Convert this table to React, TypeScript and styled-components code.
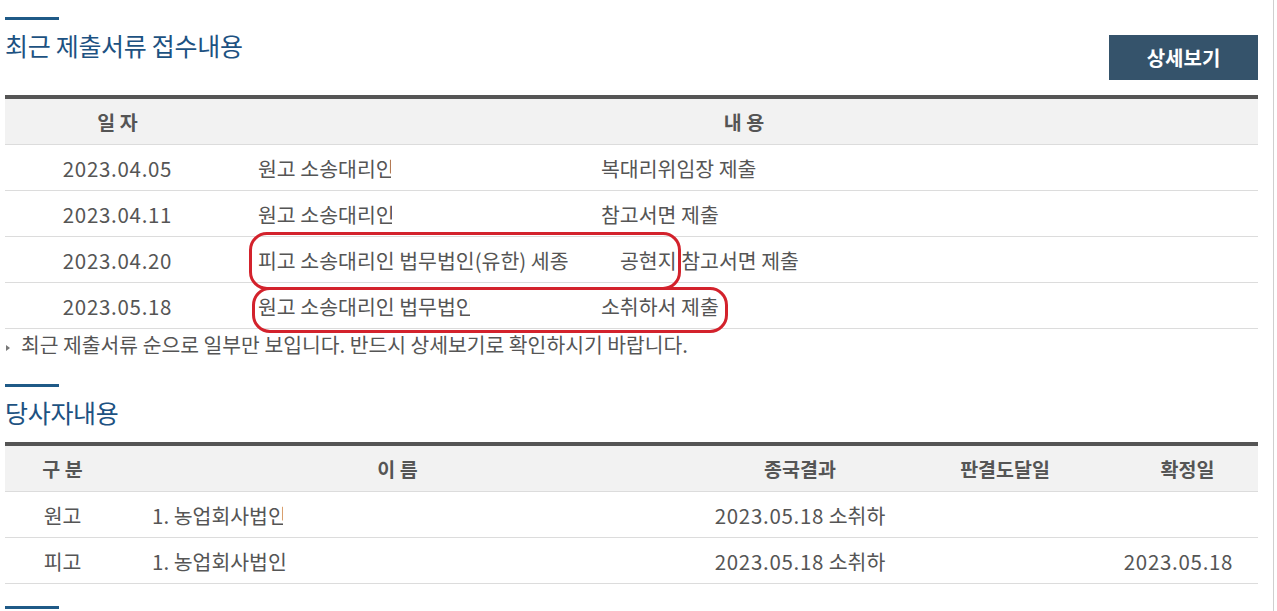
import React from "react";
import styled, { createGlobalStyle } from "styled-components";

const Global = createGlobalStyle`
  html, body { margin: 0; padding: 0; background: #fff; overflow: hidden; }
  body {
    font-family: "Noto Sans CJK KR", "Noto Sans", sans-serif;
    color: #555;
  }
`;

const Page = styled.div`
  box-sizing: border-box;
  width: 1274px;
  min-height: 611px;
  padding: 17px 15px 0 5px;
  border-right: 1px solid #cfcfcf;
`;

const Section = styled.section<{ $gap?: number }>`
  margin-top: ${(p) => p.$gap ?? 0}px;
`;

const Head = styled.div`
  display: flex;
  justify-content: space-between;
  align-items: flex-start;
  margin-bottom: 15px;
`;

const Bar = styled.div`
  width: 54px;
  height: 3px;
  background: #1f5a87;
`;

const Title = styled.h2`
  margin: 10px 0 0;
  font-size: 25px;
  line-height: 30px;
  font-weight: 400;
  color: #1d5282;
  letter-spacing: -0.3px;
`;

const DetailButton = styled.button`
  margin-top: 18px;
  width: 149px;
  height: 45px;
  border: 0;
  background: #35536b;
  color: #fff;
  font-family: inherit;
  font-size: 20px;
  font-weight: 700;
  cursor: pointer;
`;

const Table = styled.div`
  position: relative;
  border-top: 4px solid #555;
`;

const Row = styled.div<{ $cols: string; $head?: boolean }>`
  display: grid;
  grid-template-columns: ${(p) => p.$cols};
  align-items: center;
  box-sizing: border-box;
  height: 46px;
  border-bottom: 1px solid #dcdcdc;
  background: ${(p) => (p.$head ? "#f2f2f2" : "#fff")};
  font-size: ${(p) => (p.$head ? 19.5 : 20.5)}px;
  font-weight: ${(p) => (p.$head ? 700 : 400)};
  color: #555;
  white-space: nowrap;
`;

const Cell = styled.div<{ $left?: number; $center?: boolean; $num?: boolean }>`
  text-align: ${(p) => (p.$center ? "center" : "left")};
  padding-left: ${(p) => p.$left ?? 0}px;
  letter-spacing: ${(p) => (p.$num ? "0.7px" : "0")};
  overflow: hidden;
`;

const Num = styled.span`
  letter-spacing: 0.7px;
`;

const Lead = styled.span<{ $w: number }>`
  display: inline-block;
  width: ${(p) => p.$w}px;
  vertical-align: top;
`;

const Clip = styled.span<{ $w: number }>`
  display: inline-block;
  max-width: ${(p) => p.$w}px;
  overflow: hidden;
  vertical-align: top;
`;

const Oval = styled.div<{ $x: number; $y: number; $w: number; $h: number }>`
  position: absolute;
  left: ${(p) => p.$x}px;
  top: ${(p) => p.$y}px;
  width: ${(p) => p.$w}px;
  height: ${(p) => p.$h}px;
  box-sizing: border-box;
  border: 3px solid #d3222c;
  border-radius: 18px;
  pointer-events: none;
`;

const Redact = styled.div<{ $x: number; $y: number; $w: number; $h: number }>`
  position: absolute;
  left: ${(p) => p.$x}px;
  top: ${(p) => p.$y}px;
  width: ${(p) => p.$w}px;
  height: ${(p) => p.$h}px;
  background: #fff;
`;

const Note = styled.p`
  margin: 0;
  display: flex;
  align-items: center;
  height: 30px;
  font-size: 20.4px;
  color: #555;
  white-space: nowrap;
`;

const Bullet = styled.span`
  width: 0;
  height: 0;
  margin: 7px 11px 0 1px;
  border-left: 4px solid #777;
  border-top: 3px solid transparent;
  border-bottom: 3px solid transparent;
`;

const DOC_COLS = "225px 1fr";
const PARTY_COLS = "115px 555px 250px 160px 1fr";

type Doc = { date: string; content: React.ReactNode };

const docs: Doc[] = [
  {
    date: "2023.04.05",
    content: (
      <>
        <Lead $w={343}>
          <Clip $w={133}>원고 소송대리인</Clip>
        </Lead>
        복대리위임장 제출
      </>
    ),
  },
  {
    date: "2023.04.11",
    content: (
      <>
        <Lead $w={343}>
          <Clip $w={134}>원고 소송대리인</Clip>
        </Lead>
        참고서면 제출
      </>
    ),
  },
  {
    date: "2023.04.20",
    content: (
      <>
        <Lead $w={362}>피고 소송대리인 법무법인(유한) 세종</Lead>
        공현지 참고서면 제출
      </>
    ),
  },
  {
    date: "2023.05.18",
    content: (
      <>
        <Lead $w={343}>
          <Clip $w={212}>원고 소송대리인 법무법인</Clip>
        </Lead>
        소취하서 제출
      </>
    ),
  },
];

type Party = { kind: string; name: React.ReactNode; result: string; arrive: string; final: string };

const parties: Party[] = [
  { kind: "원고", name: <Clip $w={131}>1. 농업회사법인</Clip>, result: "2023.05.18 소취하", arrive: "", final: "" },
  { kind: "피고", name: "1. 농업회사법인", result: "2023.05.18 소취하", arrive: "", final: "2023.05.18" },
];

export default function App() {
  return (
    <>
      <Global />
      <Page>
        <Section>
          <Head>
            <div>
              <Bar />
              <Title>최근 제출서류 접수내용</Title>
            </div>
            <DetailButton>상세보기</DetailButton>
          </Head>
          <Table>
            <Row $cols={DOC_COLS} $head>
              <Cell $center>일 자</Cell>
              <Cell $center>내 용</Cell>
            </Row>
            {docs.map((d) => (
              <Row key={d.date} $cols={DOC_COLS}>
                <Cell $center $num>
                  {d.date}
                </Cell>
                <Cell $left={28}>{d.content}</Cell>
              </Row>
            ))}
            <Redact $x={400} $y={94} $w={192} $h={3} />
            <Oval $x={244} $y={133} $w={432} $h={58} />
            <Oval $x={247} $y={188} $w={476} $h={46} />
          </Table>
          <Note>
            <Bullet />
            최근 제출서류 순으로 일부만 보입니다. 반드시 상세보기로 확인하시기 바랍니다.
          </Note>
        </Section>

        <Section $gap={25}>
          <Head>
            <div>
              <Bar />
              <Title>당사자내용</Title>
            </div>
          </Head>
          <Table>
            <Row $cols={PARTY_COLS} $head>
              <Cell $center>구 분</Cell>
              <Cell $center>이 름</Cell>
              <Cell $center>종국결과</Cell>
              <Cell $center>판결도달일</Cell>
              <Cell $center $left={32}>
                확정일
              </Cell>
            </Row>
            {parties.map((p) => (
              <Row key={p.kind} $cols={PARTY_COLS}>
                <Cell $center>{p.kind}</Cell>
                <Cell $left={32}>{p.name}</Cell>
                <Cell $center>
                  <Num>{p.result.slice(0, 10)}</Num>
                  {p.result.slice(10)}
                </Cell>
                <Cell $center>{p.arrive}</Cell>
                <Cell $center $num $left={14}>
                  {p.final}
                </Cell>
              </Row>
            ))}
            <Redact $x={411} $y={92} $w={12} $h={3} />
          </Table>
        </Section>

        <Section $gap={22}>
          <Bar />
        </Section>
      </Page>
    </>
  );
}
